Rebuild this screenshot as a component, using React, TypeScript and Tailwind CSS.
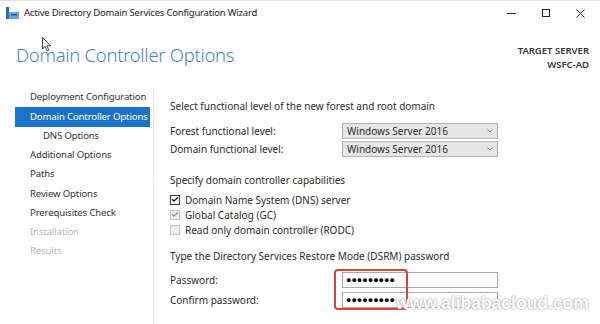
import { Check } from "lucide-react";

const navItems = [
  { label: "Deployment Configuration", state: "normal" },
  { label: "Domain Controller Options", state: "active" },
  { label: "DNS Options", state: "sub" },
  { label: "Additional Options", state: "normal" },
  { label: "Paths", state: "normal" },
  { label: "Review Options", state: "normal" },
  { label: "Prerequisites Check", state: "normal" },
  { label: "Installation", state: "disabled" },
  { label: "Results", state: "disabled" },
];

const WizardIcon = () => (
  <svg width="13" height="12" viewBox="0 0 13 12">
    <rect x="0" y="0" width="3" height="12" fill="#2b6cb8" />
    <rect x="3" y="5" width="10" height="7" fill="#6fa4dc" />
    <rect x="5" y="7" width="6" height="1.5" fill="#1f5aa0" />
  </svg>
);

const Dropdown = ({ value }: { value: string }) => (
  <div className="w-[156px] h-[16px] flex items-center justify-between bg-[#e6e6e6] border border-[#b4b4b4] pl-[4px] pr-[4px]">
    <span>{value}</span>
    <svg width="6" height="4" viewBox="0 0 6 4">
      <path d="M0.5 0.5 L3 3 L5.5 0.5" fill="none" stroke="#777" strokeWidth="0.9" />
    </svg>
  </div>
);

const CheckRow = ({
  label,
  checked,
  disabled,
}: {
  label: string;
  checked: boolean;
  disabled?: boolean;
}) => (
  <div className="h-[15px] flex items-center gap-[5px]">
    <div
      className={`w-[10px] h-[10px] flex items-center justify-center border ${
        disabled ? "border-[#c4c4c4] bg-[#ececec]" : "border-[#333] bg-white"
      }`}
    >
      {checked && (
        <Check
          className={`w-[9px] h-[9px] ${disabled ? "text-[#8c8c8c]" : "text-black"}`}
          strokeWidth={3.5}
        />
      )}
    </div>
    <span>{label}</span>
  </div>
);

const PasswordBox = () => (
  <div className="w-[156px] h-[16px] border border-[#a8a8a8] bg-white flex items-center pl-[3px] text-[9px] tracking-[0px] text-black">
    ●●●●●●●●●
  </div>
);

export default function App() {
  return (
    <div className="relative w-[600px] h-[324px] overflow-hidden bg-white border-t border-[#e2e2e2] text-[10px] text-[#2b2b2b] font-['Noto_Sans',sans-serif] flex flex-col">
      {/* Title bar */}
      <div className="h-[24px] flex items-center pl-[6px] shrink-0">
        <WizardIcon />
        <span className="ml-[5px] text-[9.5px] tracking-[-0.2px] text-[#1a1a1a]">
          Active Directory Domain Services Configuration Wizard
        </span>
        <div className="ml-auto flex items-center h-full">
          <div className="w-[34px] flex justify-center">
            <div className="w-[9px] h-px bg-[#222]" />
          </div>
          <div className="w-[35px] flex justify-center">
            <div className="w-[8px] h-[8px] border border-[#222]" />
          </div>
          <div className="w-[34px] flex justify-center mr-[3px]">
            <svg width="9" height="9" viewBox="0 0 9 9">
              <path d="M0.5 0.5 L8.5 8.5 M8.5 0.5 L0.5 8.5" stroke="#222" strokeWidth="1" />
            </svg>
          </div>
        </div>
      </div>

      {/* Header */}
      <div className="h-[62px] shrink-0 flex justify-between pl-[16px] pr-[11px] pt-[18px]">
        <h1 className="text-[18.5px] font-light leading-[24px] text-[#4a87b3] tracking-[-0.3px]">
          Domain Controller Options
        </h1>
        <div className="text-right text-[9.5px] font-semibold leading-[14px] text-[#333] pt-[1px]">
          <div>TARGET SERVER</div>
          <div>WSFC-AD</div>
        </div>
      </div>

      {/* Body */}
      <div className="flex flex-1">
        <nav className="w-[154px] shrink-0 border-r border-[#e3e3e3] pl-[15px] pr-[3px] pt-[1px]">
          {navItems.map((item, index) => (
            <div
              key={index}
              className={`h-[19.25px] flex items-center whitespace-nowrap text-[9.6px] tracking-[-0.15px] ${
                item.state === "active"
                  ? "bg-[#1a73c8] text-white pl-[15px]"
                  : item.state === "sub"
                  ? "pl-[28px] text-[#333]"
                  : item.state === "disabled"
                  ? "pl-[15px] text-[#b9b9b9]"
                  : "pl-[15px] text-[#333]"
              }`}
            >
              {item.label}
            </div>
          ))}
        </nav>

        <main className="flex-1 pl-[16px] pt-[12px] leading-[14px]">
          <div>Select functional level of the new forest and root domain</div>

          <div className="mt-[10px] flex flex-col gap-[2px]">
            <div className="flex items-center">
              <span className="w-[172px]">Forest functional level:</span>
              <Dropdown value="Windows Server 2016" />
            </div>
            <div className="flex items-center">
              <span className="w-[172px]">Domain functional level:</span>
              <Dropdown value="Windows Server 2016" />
            </div>
          </div>

          <div className="mt-[16px]">Specify domain controller capabilities</div>
          <div className="mt-[5px]">
            <CheckRow label="Domain Name System (DNS) server" checked />
            <CheckRow label="Global Catalog (GC)" checked disabled />
            <CheckRow label="Read only domain controller (RODC)" checked={false} disabled />
          </div>

          <div className="mt-[12px]">
            Type the Directory Services Restore Mode (DSRM) password
          </div>
          <div className="mt-[9px] flex flex-col gap-[4px]">
            <div className="flex items-center">
              <span className="w-[172px]">Password:</span>
              <PasswordBox />
            </div>
            <div className="flex items-center">
              <span className="w-[172px]">Confirm password:</span>
              <PasswordBox />
            </div>
          </div>
        </main>
      </div>

      {/* Red highlight around passwords */}
      <div className="absolute left-[334px] top-[268px] w-[74px] h-[41px] border-2 border-[#d0463a] rounded-[4px]" />

      {/* Watermark */}
      <div className="absolute left-[396px] top-[289px] text-[17.5px] font-bold text-white font-['Liberation_Sans',sans-serif] [text-shadow:0_0_2px_#9a9a9a,0_0_1px_#aaaaaa]">
        www.alibabacloud.com
      </div>

      {/* Mouse cursor */}
      <svg className="absolute left-[42px] top-[36px]" width="10" height="15" viewBox="0 0 10 15">
        <path
          d="M0.5 0.5 L0.5 12 L3.2 9.4 L5.2 13.8 L6.8 13.1 L4.9 8.8 L8.6 8.8 Z"
          fill="white"
          stroke="#333"
          strokeWidth="0.9"
        />
      </svg>
    </div>
  );
}
